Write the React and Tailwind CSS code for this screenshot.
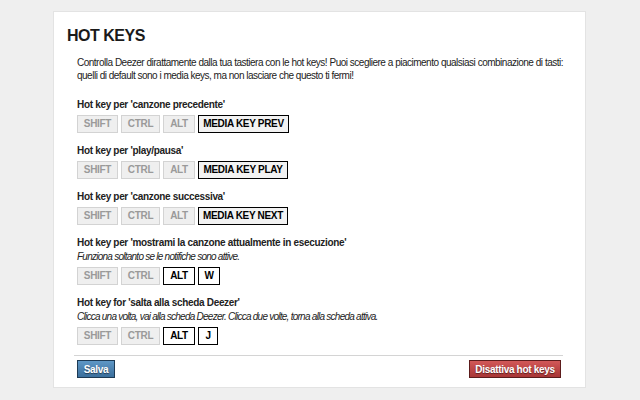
import React from 'react';

const sections = [
    { label: "Hot key per 'canzone precedente'", keys: ['SHIFT', 'CTRL', 'ALT'], on: [false, false, false], main: 'MEDIA KEY PREV', mainW: 'w-[91px]' },
    { label: "Hot key per 'play/pausa'", keys: ['SHIFT', 'CTRL', 'ALT'], on: [false, false, false], main: 'MEDIA KEY PLAY', mainW: 'w-[90px]' },
    { label: "Hot key per 'canzone successiva'", keys: ['SHIFT', 'CTRL', 'ALT'], on: [false, false, false], main: 'MEDIA KEY NEXT', mainW: 'w-[90px]' },
    { label: "Hot key per 'mostrami la canzone attualmente in esecuzione'", note: 'Funziona soltanto se le notifiche sono attive.', keys: ['SHIFT', 'CTRL', 'ALT'], on: [false, false, true], main: 'W', mainW: 'w-[22px]' },
    { label: "Hot key for 'salta alla scheda Deezer'", note: 'Clicca una volta, vai alla scheda Deezer. Clicca due volte, torna alla scheda attiva.', keys: ['SHIFT', 'CTRL', 'ALT'], on: [false, false, true], main: 'J', mainW: 'w-[20px]' },
];

const widths = { SHIFT: 'w-[41px]', CTRL: 'w-[39px]', ALT: 'w-[32px]' };

const Key = ({ label, active, w, media }) => (
    <div
        className={`${w} h-[18px] flex items-center justify-center text-[10px] font-bold leading-none border ${
            active
                ? `border-black text-black ${media ? 'bg-[#f2f2f2]' : 'bg-white'}`
                : 'border-[#d3d3d3] bg-[#efefef] text-[#9a9a9a]'
        }`}
    >
        {label}
    </div>
);

const Section = ({ s }) => (
    <div className="flex flex-col">
        <div className="text-[10px] font-bold leading-[14px] text-[#222]">{s.label}</div>
        {s.note && <div className="text-[10px] italic leading-[13px] text-[#222] tracking-[-0.075em]">{s.note}</div>}
        <div className={`flex gap-[3px] ${s.note ? 'mt-[4px]' : 'mt-[3px]'}`}>
            {s.keys.map((k, i) => (
                <Key key={k} label={k} active={s.on[i]} w={widths[k]} />
            ))}
            <Key label={s.main} active w={s.mainW} media={s.main.length > 1} />
        </div>
    </div>
);

export default function App() {
    return (
        <div className="w-[640px] h-[400px] bg-[#efefef] pt-[11px] font-['Liberation_Sans',Arial,sans-serif] tracking-[-0.02em]">
            <div className="ml-[53px] w-[533px] h-[377px] bg-white border border-[#e3e3e3] pt-[14px] pl-[13px] pr-[22px]">
                <h1 className="text-[16px] font-bold leading-[20px] text-[#1a1a1a] tracking-[-0.03em]">HOT KEYS</h1>
                <div className="ml-[10px]">
                    <p className="mt-[10px] text-[10px] leading-[13px] text-[#222] tracking-[-0.05em]">
                        <span className="block text-justify [text-align-last:justify] [word-spacing:-1.5px]">
                            Controlla Deezer dirattamente dalla tua tastiera con le hot keys! Puoi scegliere a piacimento qualsiasi combinazione di tasti:
                        </span>
                        <span className="block">
                            quelli di default sono i media keys, ma non lasciare che questo ti fermi!
                        </span>
                    </p>
                    <div className="mt-[16px] flex flex-col gap-[11px]">
                        {sections.map((s) => (
                            <Section key={s.label} s={s} />
                        ))}
                    </div>
                    <div className="mt-[10px] -ml-[3px] border-t border-[#d4d4d4]" />
                    <div className="mt-[4px] flex justify-between">
                        <button className="w-[38px] h-[18px] flex items-center justify-center text-[10px] font-bold text-white bg-linear-to-b from-[#5e97c6] to-[#3b6f9c] border border-[#1d3a54] [text-shadow:0_1px_1px_rgba(0,0,0,0.5)]">
                            Salva
                        </button>
                        <button className="w-[92px] h-[18px] mr-[2px] flex items-center justify-center text-[10px] font-bold text-white bg-linear-to-b from-[#d25858] to-[#a83636] border border-[#5c1c1c] [text-shadow:0_1px_1px_rgba(0,0,0,0.5)]">
                            Disattiva hot keys
                        </button>
                    </div>
                </div>
            </div>
        </div>
    );
}
